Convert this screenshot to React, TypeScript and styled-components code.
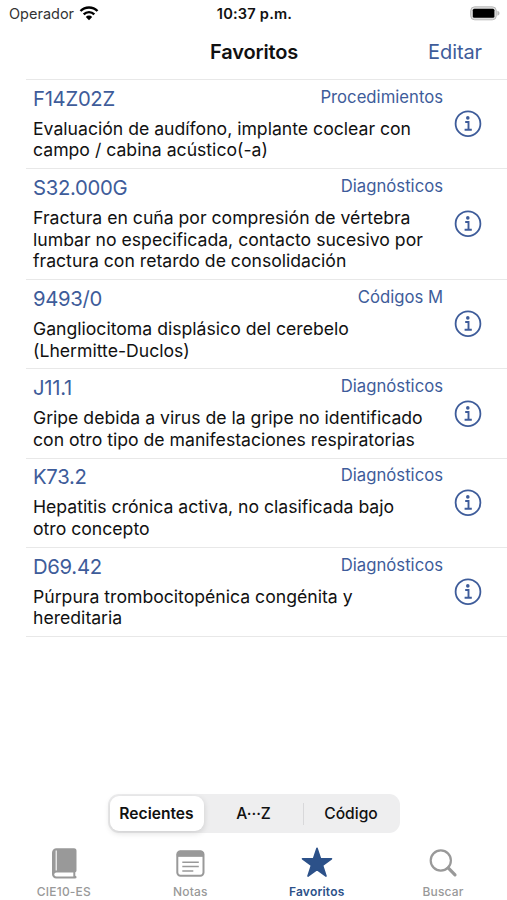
import React from "react";
import styled, { createGlobalStyle } from "styled-components";

const BLUE = "#3e5c9a";
const GRAY = "#999999";

const GlobalStyle = createGlobalStyle`
  * { box-sizing: border-box; }
  body { margin: 0; background: #fff; color: #111; font-family: Inter, "Liberation Sans", sans-serif; }
  button { border: 0; padding: 0; background: none; font: inherit; color: inherit; }
`;

const Screen = styled.div`
  width: 507px;
  height: 900px;
  display: flex;
  flex-direction: column;
  background: #fff;
  overflow: hidden;
`;

const StatusBar = styled.div`
  height: 27px;
  display: grid;
  grid-template-columns: 1fr auto 1fr;
  align-items: center;
  padding: 0 7px 0 9px;
  font-size: 14.5px;
`;

const Carrier = styled.div`
  display: flex;
  align-items: center;
  gap: 5px;
  color: #333;
`;

const Clock = styled.div`
  font-weight: 600;
  font-size: 14.6px;
  letter-spacing: 0.2px;
`;

const Battery = styled.svg`
  justify-self: end;
`;

const NavBar = styled.header`
  height: 52px;
  display: grid;
  grid-template-columns: 1fr auto 1fr;
  align-items: center;
  padding: 0 25px 2px 26px;
`;

const Title = styled.h1`
  grid-column: 2;
  margin: 0;
  font-size: 20px;
  font-weight: 600;
  letter-spacing: -0.15px;
`;

const EditButton = styled.button`
  justify-self: end;
  font-size: 20px;
  letter-spacing: -0.1px;
  color: ${BLUE};
`;

const List = styled.ul`
  flex: 1;
  margin: 0 0 0 26px;
  padding: 0;
  list-style: none;
`;

const Row = styled.li<{ $lines: number }>`
  height: ${(p) => 46.1 + p.$lines * 21.6}px;
  display: flex;
  align-items: center;
  border-top: 1px solid #e8e8e8;
  padding: 0 24px 0 7px;
  &:last-child { height: 90.3px; border-bottom: 1px solid #e8e8e8; }
`;

const Entry = styled.div`
  width: 410px;
  align-self: flex-start;
  padding-top: 4.7px;
`;

const EntryHead = styled.div`
  display: flex;
  justify-content: space-between;
  height: 33px;
  color: ${BLUE};
`;

const Code = styled.span`
  font-size: 20.3px;
  line-height: 28px;
  letter-spacing: -0.3px;
`;

const Kind = styled.span`
  font-size: 16.7px;
  line-height: 24px;
`;

const Description = styled.p`
  margin: 0;
  font-size: 17.64px;
  line-height: 21.7px;
  white-space: pre;
`;

const InfoButton = styled.button`
  margin-left: 11px;
  width: 28px;
  height: 28px;
  svg { display: block; }
`;

const Segmented = styled.div`
  align-self: center;
  width: 292px;
  height: 39px;
  display: grid;
  grid-template-columns: 94px 99px 1fr;
  padding: 2px;
  margin-bottom: 11px;
  border-radius: 11px;
  background: #eeeeef;
`;

const Segment = styled.button<{ $active?: boolean; $divided?: boolean }>`
  display: flex;
  align-items: center;
  justify-content: center;
  font-size: 15.6px;
  font-weight: ${(p) => (p.$active ? 600 : 500)};
  border-radius: ${(p) => (p.$active ? "9px" : "0")};
  background: ${(p) => (p.$active ? "#fff" : "none")};
  box-shadow: ${(p) => (p.$active ? "0 2px 6px rgba(0,0,0,.14)" : "none")};
  padding-left: ${(p) => (p.$active ? 0 : 1)}px;
  &::before {
    content: "";
    display: ${(p) => (p.$divided ? "block" : "none")};
    width: 1px;
    height: 22px;
    margin: 0 auto 0 -1px;
    background: #d8d8da;
  }
  &::after {
    content: "";
    display: ${(p) => (p.$divided ? "block" : "none")};
    margin: 0 -1px 0 auto;
  }
`;

const TabBar = styled.nav`
  height: 56px;
  display: grid;
  grid-template-columns: repeat(4, 126.4px);
  justify-content: center;
`;

const Tab = styled.button<{ $active?: boolean }>`
  display: flex;
  flex-direction: column;
  align-items: center;
  color: ${(p) => (p.$active ? "#2c5189" : GRAY)};
  font-size: 12px;
  font-weight: ${(p) => (p.$active ? 600 : 500)};
  line-height: 17px;
  letter-spacing: 0.2px;
  svg { display: block; margin-bottom: 3px; }
`;

const entries = [
  { code: "F14Z02Z", kind: "Procedimientos", lines: ["Evaluación de audífono, implante coclear con", "campo / cabina acústico(-a)"] },
  { code: "S32.000G", kind: "Diagnósticos", lines: ["Fractura en cuña por compresión de vértebra", "lumbar no especificada, contacto sucesivo por", "fractura con retardo de consolidación"] },
  { code: "9493/0", kind: "Códigos M", lines: ["Gangliocitoma displásico del cerebelo", "(Lhermitte-Duclos)"] },
  { code: "J11.1", kind: "Diagnósticos", lines: ["Gripe debida a virus de la gripe no identificado", "con otro tipo de manifestaciones respiratorias"] },
  { code: "K73.2", kind: "Diagnósticos", lines: ["Hepatitis crónica activa, no clasificada bajo", "otro concepto"] },
  { code: "D69.42", kind: "Diagnósticos", lines: ["Púrpura trombocitopénica congénita y", "hereditaria"] },
];

const WifiIcon = () => (
  <svg width="20" height="16" viewBox="0 0 20 16" fill="none" stroke="#000" strokeWidth="2.4">
    <path d="M1.5 5a12 12 0 0 1 17 0" />
    <path d="M4.7 8.3a7.5 7.5 0 0 1 10.6 0" />
    <path d="M10 14.2 6.8 10.9a4.5 4.5 0 0 1 6.4 0Z" fill="#000" stroke="none" />
  </svg>
);

const BatteryIcon = () => (
  <Battery width="30" height="16" viewBox="0 0 30 16">
    <rect x="0.7" y="0.8" width="25.6" height="13" rx="4" fill="#dedede" stroke="#b9b9b9" />
    <rect x="2.8" y="2.8" width="21.6" height="9" rx="1.5" fill="#000" />
    <path d="M27.4 4.8c2.8.8 2.8 4.2 0 5Z" fill="#b9b9b9" />
  </Battery>
);

const InfoIcon = () => (
  <svg width="28" height="28" viewBox="0 0 28 28" fill="none" stroke={BLUE}>
    <circle cx="14" cy="13.7" r="12.4" strokeWidth="1.8" />
    <circle cx="13.8" cy="7.9" r="1.8" fill={BLUE} stroke="none" />
    <path d="M11.2 12h3.3v7.6M10.6 19.8h7.2" strokeWidth="1.9" />
  </svg>
);

const BookIcon = () => (
  <svg width="30" height="36" viewBox="0 0 30 36">
    <path d="M7.5 4.3H25a2.5 2.5 0 0 1 2.5 2.5v19.5c0 1-.4 1.6-1.2 2v3.5c.9.3 1.2.8 1.2 1.4 0 .8-.5 1.2-1.3 1.2H7.2A4.2 4.2 0 0 1 3 30.2V8.8a4.5 4.5 0 0 1 4.5-4.5Z" fill={GRAY} />
    <path d="M7.2 6.5v20" stroke="#fff" strokeWidth="1.1" />
    <path d="M7.3 28.5h17v4h-17a2 2 0 0 1 0-4Z" fill="#fff" />
  </svg>
);

const NotesIcon = () => (
  <svg width="30" height="36" viewBox="0 0 30 36" fill="none" stroke={GRAY}>
    <rect x="2.3" y="7.3" width="26.2" height="24.5" rx="3.2" strokeWidth="2" />
    <path d="M2.3 12.3v-2a3 3 0 0 1 3-3h20.2a3 3 0 0 1 3 3v2Z" fill={GRAY} />
    <path d="M7.3 18.2h16.5M7.3 22.4h16.5M7.3 27h11" strokeWidth="1.5" />
  </svg>
);

const StarIcon = () => (
  <svg width="34" height="36" viewBox="0 0 34 36">
    <path d="m17 4.2 3.5 10.6h11L22.6 21.4l3.4 10.7-9-6.6-9 6.6 3.4-10.7-8.9-6.6h11Z" fill="#2c5189" stroke="#2c5189" strokeWidth="1.6" strokeLinejoin="round" />
  </svg>
);

const SearchIcon = () => (
  <svg width="30" height="36" viewBox="0 0 30 36" fill="none" stroke={GRAY}>
    <circle cx="12.8" cy="16.5" r="10.1" strokeWidth="2.2" />
    <path d="m20.2 23.9 6.8 7" strokeWidth="3.2" strokeLinecap="round" />
  </svg>
);

export default function App() {
  return (
    <>
      <GlobalStyle />
      <Screen>
        <StatusBar>
          <Carrier>Operador <WifiIcon /></Carrier>
          <Clock>10:37 p.m.</Clock>
          <BatteryIcon />
        </StatusBar>
        <NavBar>
          <Title>Favoritos</Title>
          <EditButton>Editar</EditButton>
        </NavBar>
        <List>
          {entries.map((e) => (
            <Row key={e.code} $lines={e.lines.length}>
              <Entry>
                <EntryHead>
                  <Code>{e.code}</Code>
                  <Kind>{e.kind}</Kind>
                </EntryHead>
                <Description>{e.lines.join("\n")}</Description>
              </Entry>
              <InfoButton aria-label="Información"><InfoIcon /></InfoButton>
            </Row>
          ))}
        </List>
        <Segmented>
          <Segment $active>Recientes</Segment>
          <Segment>A···Z</Segment>
          <Segment $divided>Código</Segment>
        </Segmented>
        <TabBar>
          <Tab><BookIcon />CIE10-ES</Tab>
          <Tab><NotesIcon />Notas</Tab>
          <Tab $active><StarIcon />Favoritos</Tab>
          <Tab><SearchIcon />Buscar</Tab>
        </TabBar>
      </Screen>
    </>
  );
}
